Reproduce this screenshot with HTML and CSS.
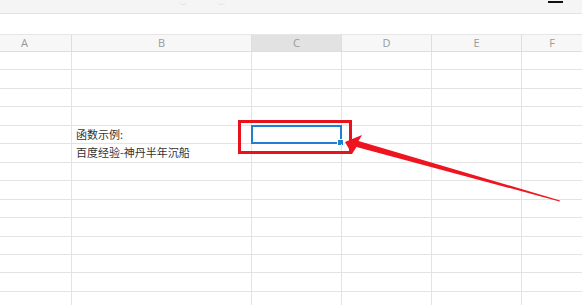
FILE: index.html
```html
<!DOCTYPE html>
<html>
	<head>
		<meta charset="utf-8">
		<link rel="stylesheet" href="styles.css">
	</head>
	<body>
		<div class="titlebar">
			<span class="faint f1"></span>
			<span class="faint f2"></span>
			<span class="minimize"></span>
		</div>
		<div class="formula"></div>

		<div class="sheet">
			<div class="row head">
				<div class="cell a">A</div>
				<div class="cell b">B</div>
				<div class="cell c on">C</div>
				<div class="cell d">D</div>
				<div class="cell e">E</div>
				<div class="cell f">F</div>
			</div>
			<div class="row"><div class="cell a"></div><div class="cell b"></div><div class="cell c"></div><div class="cell d"></div><div class="cell e"></div><div class="cell f"></div></div>
			<div class="row"><div class="cell a"></div><div class="cell b"></div><div class="cell c"></div><div class="cell d"></div><div class="cell e"></div><div class="cell f"></div></div>
			<div class="row"><div class="cell a"></div><div class="cell b"></div><div class="cell c"></div><div class="cell d"></div><div class="cell e"></div><div class="cell f"></div></div>
			<div class="row"><div class="cell a"></div><div class="cell b"></div><div class="cell c"></div><div class="cell d"></div><div class="cell e"></div><div class="cell f"></div></div>
			<div class="row">
				<div class="cell a"></div>
				<div class="cell b">函数示例:</div>
				<div class="cell c"><span class="selected"><span class="handle"></span></span></div>
				<div class="cell d"></div><div class="cell e"></div><div class="cell f"></div>
			</div>
			<div class="row">
				<div class="cell a"></div>
				<div class="cell b">百度经验-神丹半年沉船</div>
				<div class="cell c"></div><div class="cell d"></div><div class="cell e"></div><div class="cell f"></div>
			</div>
			<div class="row"><div class="cell a"></div><div class="cell b"></div><div class="cell c"></div><div class="cell d"></div><div class="cell e"></div><div class="cell f"></div></div>
			<div class="row"><div class="cell a"></div><div class="cell b"></div><div class="cell c"></div><div class="cell d"></div><div class="cell e"></div><div class="cell f"></div></div>
			<div class="row"><div class="cell a"></div><div class="cell b"></div><div class="cell c"></div><div class="cell d"></div><div class="cell e"></div><div class="cell f"></div></div>
			<div class="row"><div class="cell a"></div><div class="cell b"></div><div class="cell c"></div><div class="cell d"></div><div class="cell e"></div><div class="cell f"></div></div>
			<div class="row"><div class="cell a"></div><div class="cell b"></div><div class="cell c"></div><div class="cell d"></div><div class="cell e"></div><div class="cell f"></div></div>
			<div class="row"><div class="cell a"></div><div class="cell b"></div><div class="cell c"></div><div class="cell d"></div><div class="cell e"></div><div class="cell f"></div></div>
			<div class="row"><div class="cell a"></div><div class="cell b"></div><div class="cell c"></div><div class="cell d"></div><div class="cell e"></div><div class="cell f"></div></div>
			<div class="row"><div class="cell a"></div><div class="cell b"></div><div class="cell c"></div><div class="cell d"></div><div class="cell e"></div><div class="cell f"></div></div>
		</div>

		<!-- annotation drawn over the sheet -->
		<svg class="markup" width="582" height="305" viewBox="0 0 582 305">
			<rect x="239.5" y="121.5" width="111" height="31" fill="none" stroke="#e8121c" stroke-width="3"/>
			<polygon fill="#ee1520" points="345,142 362,135 358.5,141 560,200.4 559.5,201.4 356.5,147 352,154"/>
		</svg>
	</body>
</html>
```

FILE: styles.css
```css
body, html {
	margin: 0;
	padding: 0;
	height: 100%;
	overflow: hidden;
}

body {
	position: relative;
	background: #fff;
	font-family: "Noto Sans CJK SC", "Noto Sans", sans-serif;
	color: #333;
}

.titlebar {
	display: flex;
	align-items: flex-start;
	height: 13px;
	background: #f5f5f5;
	border-bottom: 1px solid #e3e3e3;
}

.faint {
	display: block;
	width: 8px;
	height: 4px;
	border-bottom: 1px solid #e4e4e4;
	border-radius: 0 0 4px 4px;
}

.f1 { margin-left: 179px; }
.f2 { margin-left: 30px; }

.minimize {
	display: block;
	width: 15px;
	height: 2px;
	margin: 1px 19px 0 auto;
	background: #111;
}

.formula {
	height: 20px;
}

.row {
	display: flex;
	box-sizing: border-box;
	height: 18.46px;
	border-bottom: 1px solid #e3e3e3;
}

.row.head {
	height: 18px;
	border-top: 1px solid #e6e6e6;
	border-bottom-color: #dedede;
	background: #f7f7f7;
}

.cell {
	box-sizing: border-box;
	flex: none;
	height: 100%;
	border-right: 1px solid #e3e3e3;
	font-size: 11px;
	line-height: 17px;
	padding-left: 4px;
	white-space: nowrap;
}

.head .cell {
	padding: 0;
	text-align: center;
	font-family: "Open Sans", "Noto Sans", sans-serif;
	font-size: 11px;
	line-height: 16px;
	color: #9a9a9a;
	border-right-color: #dedede;
}

.head .cell.a {
	padding-right: 22px;
}

.head .cell.on {
	background: #e2e2e2;
}

.a { width: 72px; }
.b { width: 180px; }
.c { width: 90px; position: relative; }
.d { width: 90px; }
.e { width: 90px; }
.f { flex: 1; border-right: 0; }

.selected {
	position: absolute;
	left: -1px;
	top: -1px;
	right: -1px;
	bottom: -1px;
	border: 2px solid #1f7fd3;
}

.handle {
	position: absolute;
	right: -4px;
	bottom: -4px;
	width: 5px;
	height: 5px;
	background: #1f7fd3;
	border: 1px solid #fff;
}

.markup {
	position: absolute;
	left: 0;
	top: 0;
}
```
